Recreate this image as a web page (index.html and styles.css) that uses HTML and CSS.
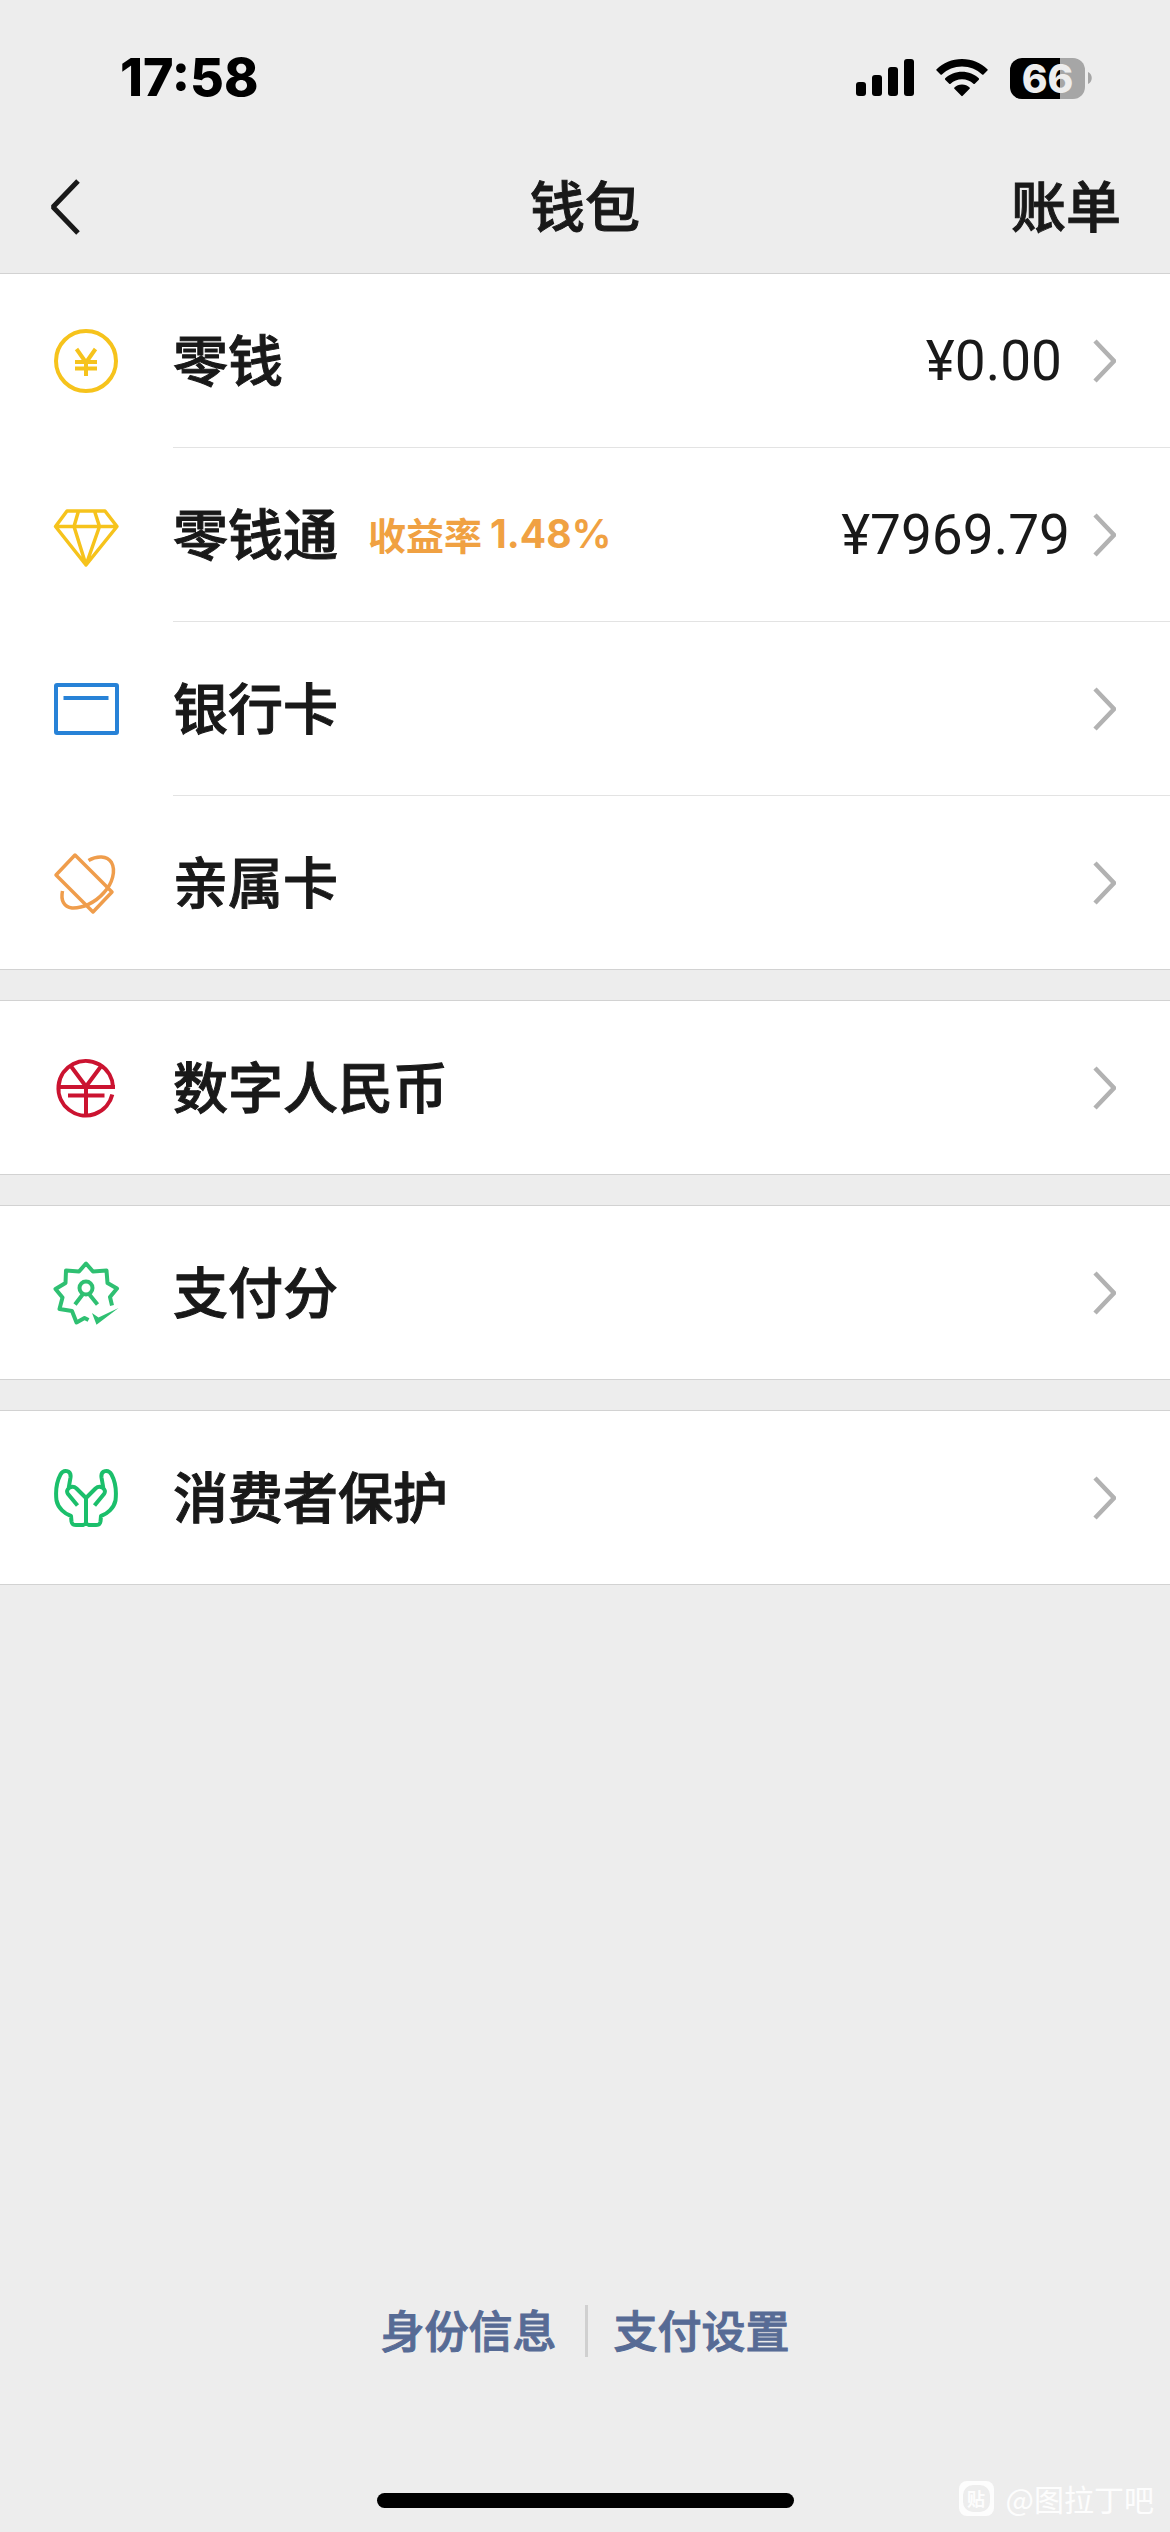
FILE: index.html
```html
<!DOCTYPE html>
<html lang="zh-CN">
<head>
<meta charset="utf-8">
<meta name="viewport" content="width=device-width, initial-scale=1">
<title>钱包</title>
<link rel="stylesheet" href="styles.css">
</head>
<body>
<svg class="sprite" aria-hidden="true">
  <symbol id="chevron" viewBox="0 0 24 44">
    <path d="M3 2 22 22 3 42" fill="none" stroke="currentColor" stroke-width="4.500"/>
  </symbol>
</svg>

<header class="top">
  <div class="status">
    <span class="time">17:58</span>
    <div class="status-icons">
      <svg width="58" height="38" viewBox="0 0 58 38" role="img" aria-label="信号">
        <rect x="0" y="23" width="10" height="14" rx="3"/>
        <rect x="16" y="16" width="10" height="21" rx="3"/>
        <rect x="32" y="8" width="10" height="29" rx="3"/>
        <rect x="48" y="0" width="10" height="37" rx="3"/>
      </svg>
      <svg width="52" height="38" viewBox="0 0 52 38" role="img" aria-label="无线网络">
        <path d="M26 0C16 0 7 4 .6 10.200a1 1 0 0 0 0 1.400L4.500 15.500a1 1 0 0 0 1.400 0C11.300 10.500 18.300 7.600 26 7.600s14.700 2.900 20.100 7.900a1 1 0 0 0 1.400 0l3.900-3.900a1 1 0 0 0 0-1.400C45 4 36 0 26 0z"/>
        <path d="M26 12.800c-6.500 0-12.400 2.400-16.800 6.500a1 1 0 0 0 0 1.400l4 4a1 1 0 0 0 1.400 0c3-2.700 7-4.400 11.400-4.400s8.400 1.700 11.400 4.400a1 1 0 0 0 1.400 0l4-4a1 1 0 0 0 0-1.400C38.400 15.200 32.500 12.800 26 12.800z"/>
        <path d="M26 25.500c-3 0-5.600 1.100-7.600 2.900a1 1 0 0 0 0 1.400l6.900 7a1 1 0 0 0 1.400 0l6.900-7a1 1 0 0 0 0-1.400c-2-1.800-4.600-2.900-7.600-2.900z"/>
      </svg>
      <div class="battery">
        <span class="battery-body">66</span>
        <svg width="4" height="12" viewBox="0 0 4 12"><path d="M0 0C5 2 5 10 0 12z" fill="#a6a6a6"/></svg>
      </div>
    </div>
  </div>
  <nav class="nav">
    <button class="back" type="button" aria-label="返回">
      <svg width="32" height="58" viewBox="0 0 32 58"><path d="M29 3 4 29 29 55" fill="none" stroke="#191919" stroke-width="5" stroke-linejoin="bevel"/></svg>
    </button>
    <h1 class="title">钱包</h1>
    <a class="bill" href="#bill">账单</a>
  </nav>
</header>

<main class="groups">
  <section class="group">
    <a class="row" href="#balance">
      <svg class="icon yellow" viewBox="0 0 72 72">
        <circle cx="36" cy="36" r="30"/>
        <path d="M26.500 24 36 37.500 45.500 24M25 37H47M25 43.500H47M36 37V51"/>
      </svg>
      <span class="cell">
        <span class="label">零钱</span>
        <span class="amount short">¥0.00</span>
        <svg class="chevron"><use href="#chevron"/></svg>
      </span>
    </a>
    <a class="row" href="#fund">
      <svg class="icon yellow" viewBox="0 0 72 72">
        <path d="M17 12H55L67 27.500 36 66 5.500 27.500zM5.500 27.500H67M28.500 12 24 27.500 36 66 49.500 27.500 44.500 12" stroke-width="3.500"/>
      </svg>
      <span class="cell">
        <span class="label">零钱通</span>
        <span class="rate">收益率<span class="rate-value">1.48%</span></span>
        <span class="amount">¥7969.79</span>
        <svg class="chevron"><use href="#chevron"/></svg>
      </span>
    </a>
    <a class="row" href="#cards">
      <svg class="icon blue" viewBox="0 0 72 72">
        <rect x="6" y="12" width="61" height="48" rx="1"/>
        <path d="M13.500 25H58.500"/>
      </svg>
      <span class="cell">
        <span class="label">银行卡</span>
        <svg class="chevron"><use href="#chevron"/></svg>
      </span>
    </a>
    <a class="row" href="#family">
      <svg class="icon orange" viewBox="0 0 72 72">
        <g stroke-width="3.500">
          <path d="M25 8 62 45 43 65 6 28z"/>
          <path d="M38.500 13.500C47 8.500 57 8.500 61.500 15.500 66 23.500 62.500 36.500 54 45.500 45 56 32 61.500 22 61 14 60 10.500 53.500 12.500 44"/>
        </g>
      </svg>
      <span class="cell">
        <span class="label">亲属卡</span>
        <svg class="chevron"><use href="#chevron"/></svg>
      </span>
    </a>
  </section>

  <section class="group">
    <a class="row" href="#ecny">
      <svg class="icon red" viewBox="0 0 72 72">
        <path d="M63 35A27.300 27.300 0 1 0 62.300 42.500M9 35H65M18 43.500H54.500M36 34V63M21.500 15 36 34.500 50.500 15"/>
      </svg>
      <span class="cell">
        <span class="label">数字人民币</span>
        <svg class="chevron"><use href="#chevron"/></svg>
      </span>
    </a>
  </section>

  <section class="group">
    <a class="row" href="#score">
      <svg class="icon mint" viewBox="0 0 72 72">
        <path d="M62 48.500 60 40 67 31.500 57.500 26 56.500 13.500 43 14.500 36 6.500 29 14.500 16 13.500 15.500 26 5.500 32 12.500 40.500 9.500 52 22 54 26.500 65.500 34.500 61 38.500 63"/>
        <circle cx="36" cy="31" r="6.500"/>
        <path d="M25 47.500 33 37M47.500 47.500 39 37"/>
        <path class="solid" d="M42 56 48.500 60.500 68.500 51 46.500 67.800z"/>
      </svg>
      <span class="cell">
        <span class="label">支付分</span>
        <svg class="chevron"><use href="#chevron"/></svg>
      </span>
    </a>
  </section>

  <section class="group">
    <a class="row" href="#protection">
      <svg class="icon green" viewBox="0 0 72 72">
        <path d="M36 36V62M36 36 26.500 26.500C22 22.500 14.500 27 18 32L27.500 43.500M18.500 27 20.500 15.500C21.500 8 13.500 7 10.500 12.500 6.500 20 5.500 30 6.500 38.500 8 46 15 52 21 54L21.500 59.500C22 63 24 63 26 63H33L36 61.500 39 63H46C48 63 50 63 50.500 59.500L51 54C57 52 64 46 65.500 38.500 66.500 30 65.500 20 61.500 12.500 58.500 7 50.500 8 51.500 15.500L53.500 27M36 36 45.500 26.500C50 22.500 57.500 27 54 32L44.500 43.500"/>
      </svg>
      <span class="cell">
        <span class="label">消费者保护</span>
        <svg class="chevron"><use href="#chevron"/></svg>
      </span>
    </a>
  </section>
</main>

<footer class="footer">
  <nav class="links">
    <a href="#identity">身份信息</a>
    <a href="#settings">支付设置</a>
  </nav>
  <div class="home-bar"></div>
  <div class="watermark"><span class="badge"><span class="bubble">贴</span></span>@图拉丁吧</div>
</footer>
</body>
</html>
```

FILE: styles.css
```css
* {
  box-sizing: border-box;
}

body {
  margin: 0;
  min-height: 100vh;
  display: flex;
  flex-direction: column;
  background: #ededed;
  color: #191919;
  font-family: "Noto Sans CJK SC", sans-serif;
  font-weight: 500;
}

a {
  color: inherit;
  text-decoration: none;
}

h1 {
  margin: 0;
}

svg {
  display: block;
  flex: none;
}

.sprite {
  display: none;
}

/* Status bar and navigation */
.status {
  display: flex;
  justify-content: space-between;
  align-items: center;
  height: 156px;
  padding: 0 78px 0 120px;
}

.time {
  color: #000;
  font: 800 52px/60px Inter, sans-serif;
}

.status-icons {
  display: flex;
  align-items: center;
  gap: 22px;
}

.battery {
  display: flex;
  align-items: center;
  gap: 3px;
}

.battery-body {
  width: 75px;
  height: 41px;
  border-radius: 12px;
  background: linear-gradient(90deg, #000 50px, #a6a6a6 50px);
  color: #ededed;
  font: 800 39px/41px Inter, sans-serif;
  text-align: center;
}

.nav {
  display: grid;
  grid-template-columns: 1fr auto 1fr;
  align-items: center;
  height: 101px;
  margin-bottom: 16px;
  padding: 0 49px;
}

.back {
  justify-self: start;
  padding: 0;
  border: 0;
  background: none;
}

.title,
.bill,
.label {
  padding-bottom: 8px;
  font-size: 55px;
  line-height: 80px;
  font-weight: 500;
  -webkit-text-stroke: 1px currentColor;
}

.bill {
  justify-self: end;
}

/* Wallet list */
.groups {
  display: flex;
  flex-direction: column;
  gap: 30px;
}

.group {
  border: 1px solid #d2d2d2;
  border-width: 1px 0;
  background: #fff;
}

.row {
  display: flex;
  align-items: center;
  gap: 51px;
  padding-left: 50px;
}

.icon {
  width: 72px;
  height: 72px;
  fill: none;
  stroke: currentColor;
  stroke-width: 4;
  stroke-linejoin: round;
}

.solid {
  fill: currentColor;
  stroke: none;
}

.yellow { color: #f6c31c; }
.blue { color: #2782d7; }
.orange { color: #ef9d4c; }
.red { color: #cb1330; }
.mint { color: #2fc072; }
.green { color: #1bbf6b; }

.cell {
  flex: 1;
  display: flex;
  align-items: center;
  height: 173px;
  padding-right: 54px;
}

.row:not(:last-child) .cell {
  height: 174px;
  border-bottom: 1px solid #e3e3e3;
}

.rate {
  display: flex;
  gap: 8px;
  margin-left: 30px;
  padding-bottom: 2px;
  color: #f0a142;
  font-size: 38px;
  line-height: 56px;
  font-weight: 700;
}

.rate-value {
  font-family: Inter, sans-serif;
  font-size: 39px;
}

.amount {
  margin-left: auto;
  font: 400 55px/64px Roboto, sans-serif;
}

.short {
  padding-right: 8px;
}

.chevron {
  width: 24px;
  height: 44px;
  margin-left: auto;
  color: #b2b2b2;
}

.amount + .chevron {
  margin-left: 22px;
}

/* Footer */
.footer {
  position: relative;
  display: flex;
  flex-direction: column;
  align-items: center;
  gap: 120px;
  margin-top: auto;
  padding-bottom: 24px;
}

.links {
  display: flex;
  align-items: center;
  color: #576b95;
  font-size: 44px;
  line-height: 48px;
  -webkit-text-stroke: 1px currentColor;
}

.links a {
  padding-bottom: 4px;
}

.links a + a {
  margin-left: 28px;
  padding-left: 26px;
  border-left: 3px solid #d0d0d0;
}

.home-bar {
  width: 417px;
  height: 15px;
  margin-top: 16px;
  border-radius: 8px;
  background: #000;
}

.watermark {
  position: absolute;
  right: 16px;
  bottom: 12px;
  display: flex;
  align-items: center;
  gap: 12px;
  color: #fdfdfd;
  font-size: 30px;
  line-height: 44px;
  font-weight: 400;
}

.badge {
  padding: 4px;
  border-radius: 8px;
  background: #fdfdfd;
}

.bubble {
  display: block;
  width: 27px;
  height: 27px;
  border-radius: 10px;
  background: #ededed;
  font-size: 18px;
  line-height: 26px;
  font-weight: 700;
  text-align: center;
}
```
